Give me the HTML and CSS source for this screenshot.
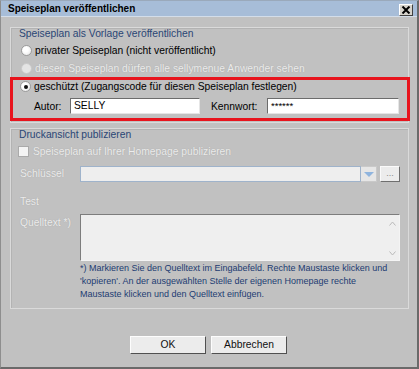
FILE: index.html
```html
<!DOCTYPE html>
<html lang="de">
<head>
  <meta charset="UTF-8" />
  <title>Speiseplan veröffentlichen</title>
  <link rel="stylesheet" href="styles.css">
</head>
<body>
  <div class="window">
    <!-- Titelleiste -->
    <div class="titlebar">
      <span class="title">Speiseplan veröffentlichen</span>
      <span class="close">
        <svg width="10" height="8" viewBox="0 0 10 8"><path d="M1.5 0.5 L8.5 7.5 M8.5 0.5 L1.5 7.5" stroke="#000" stroke-width="2"/></svg>
      </span>
    </div>

    <div class="content">
      <!-- Vorlage -->
      <div class="group first">
        <div class="legend">Speiseplan als Vorlage veröffentlichen</div>
        <div class="opt"><span class="radio"></span>privater Speiseplan (nicht veröffentlicht)</div>
        <div class="opt disabled"><span class="radio"></span>diesen Speiseplan dürfen alle sellymenue Anwender sehen</div>
        <div class="highlight">
          <div class="opt"><span class="radio checked"></span>geschützt (Zugangscode für diesen Speiseplan festlegen)</div>
          <div class="creds">
            <span class="lbl-autor">Autor:</span>
            <span class="field autor">SELLY</span>
            <span class="lbl-kennwort">Kennwort:</span>
            <span class="field kennwort">******</span>
          </div>
        </div>
      </div>

      <!-- Druckansicht -->
      <div class="group second">
        <div class="legend">Druckansicht publizieren</div>
        <div class="check-row disabled"><span class="checkbox"></span>Speiseplan auf Ihrer Homepage publizieren</div>
        <div class="form">
          <span class="label disabled">Schlüssel</span>
          <div class="key-row">
            <span class="combo"></span>
            <span class="combo-arrow">
              <svg width="10" height="5" viewBox="0 0 10 5"><path d="M0 0 L10 0 L5 5 Z" fill="#8fb4de"/></svg>
            </span>
            <span class="dots">...</span>
          </div>
          <span class="label disabled test">Test</span>
          <span></span>
          <span class="label disabled src">Quelltext *)</span>
          <div class="textarea">
            <span class="scroll">
              <svg width="7" height="5" viewBox="0 0 7 5"><path d="M0.5 4.5 L3.5 1 L6.5 4.5" fill="none" stroke="#b9b9b9"/></svg>
              <svg width="7" height="5" viewBox="0 0 7 5"><path d="M0.5 0.5 L3.5 4 L6.5 0.5" fill="none" stroke="#b9b9b9"/></svg>
            </span>
          </div>
          <span></span>
          <p class="note">*) Markieren Sie den Quelltext im Eingabefeld. Rechte Maustaste klicken und 'kopieren'. An der ausgewählten Stelle der eigenen Homepage rechte Maustaste klicken und den Quelltext einfügen.</p>
        </div>
      </div>

      <div class="buttons">
        <span class="btn">OK</span>
        <span class="btn">Abbrechen</span>
      </div>
    </div>
  </div>
</body>
</html>
```

FILE: styles.css
```css
html, body {
  margin: 0;
  padding: 0;
}

body {
  font-family: 'Liberation Sans', Arial, sans-serif;
  font-size: 10.3px;
  color: #000;
  background: #c0c0c0;
}

.window {
  width: 419px;
  height: 369px;
  box-sizing: border-box;
  background: #c1c1c1;
  border-left: 1px solid #8e8e8e;
  border-right: 2px solid #6a6a6a;
  border-bottom: 2px solid #6a6a6a;
  border-top: 1px solid #9aa9bb;
}

.titlebar {
  height: 15px;
  background: #a7bdd8;
  border-bottom: 1px solid #d3dde9;
  display: flex;
  align-items: center;
  justify-content: space-between;
  padding: 0 4px 0 7px;
}

.title {
  font-weight: bold;
  font-size: 10px;
}

.close {
  width: 12px;
  height: 10px;
  background: #d6d3cc;
  border: 1px solid;
  border-color: #fff #404040 #404040 #fff;
  display: flex;
  align-items: center;
  justify-content: center;
  margin-top: 3px;
}

.content {
  padding: 10px 8px 0 9px;
}

.group {
  border: 1px solid #dadada;
  box-shadow: inset 1px 1px 0 #b3b3b3;
}

.legend {
  color: #2a4675;
  line-height: 11px;
  padding-left: 8px;
}

.first {
  height: 94px;
}

.first .legend {
  margin-bottom: 2px;
}

.opt {
  display: flex;
  align-items: center;
  height: 18px;
  padding-left: 10px;
}

.radio {
  width: 9px;
  height: 9px;
  border-radius: 50%;
  background: radial-gradient(circle at 40% 40%, #fff 30%, #e2e2e2 100%);
  border: 1px solid #9c9c9c;
  margin-right: 3px;
  display: flex;
  align-items: center;
  justify-content: center;
}

.radio.checked::after {
  content: "";
  width: 4px;
  height: 4px;
  border-radius: 50%;
  background: #111;
}

.disabled {
  color: #ececec;
  text-shadow: 0 0 1px #9d9d9d;
}

.disabled .radio {
  background: #e4e4e4;
  border-color: #c8c8c8;
}

.highlight {
  border: 3px solid #e8141d;
  margin: 0 -2px 0 -1px;
  height: 38px;
}

.highlight .opt {
  height: 13px;
  padding-left: 7px;
}

.creds {
  display: flex;
  align-items: center;
  margin-top: 5px;
}

.field {
  height: 14px;
  box-sizing: content-box;
  background: #fff;
  border: 1px solid;
  border-color: #6c6c6c #e6e6e6 #e6e6e6 #6c6c6c;
  line-height: 14px;
  padding-left: 3px;
}

.lbl-autor {
  margin-left: 21px;
  width: 36px;
}

.autor {
  width: 125px;
}

.lbl-kennwort {
  margin-left: 11px;
  width: 56px;
}

.kennwort {
  width: 127px;
  font-size: 9.5px;
}

.second {
  margin-top: 5px;
  height: 179px;
}

.check-row {
  display: flex;
  align-items: center;
  height: 14px;
  margin-top: 4px;
  padding-left: 7px;
}

.checkbox {
  width: 9px;
  height: 9px;
  background: #f4f4f4;
  border: 1px solid #aaa;
  margin-right: 4px;
}

.form {
  display: grid;
  grid-template-columns: 60px 320px;
  align-items: start;
  padding-left: 9px;
  margin-top: 8px;
}

.label {
  line-height: 15px;
}

.key-row {
  display: flex;
  height: 16px;
}

.combo {
  width: 279px;
  background: #eeeeee;
  border: 1px solid #9fb3cb;
}

.combo-arrow {
  width: 15px;
  background: #e6e6e6;
  border: 1px solid #c9c9c9;
  border-left: none;
  display: flex;
  align-items: center;
  justify-content: center;
}

.dots {
  width: 18px;
  margin-left: 3px;
  background: #ececec;
  border: 1px solid;
  border-color: #fafafa #6f6f6f #6f6f6f #fafafa;
  font-size: 9px;
  line-height: 12px;
  text-align: center;
  color: #8a8a8a;
}

.test {
  margin-top: 12px;
  height: 20px;
}

.src {
  margin-top: 1px;
}

.textarea {
  height: 45px;
  background: #efefef;
  border: 1px solid;
  border-color: #7d7d7d #f4f4f4 #f4f4f4 #7d7d7d;
  display: flex;
  justify-content: flex-end;
}

.scroll {
  width: 14px;
  display: flex;
  flex-direction: column;
  justify-content: space-between;
  align-items: center;
  padding: 6px 0 4px;
}

.note {
  grid-column: 2;
  margin: 1px 0 0;
  color: #1d3c72;
  font-size: 9px;
  line-height: 13px;
}

.buttons {
  display: flex;
  justify-content: center;
  gap: 5px;
  margin-top: 27px;
  padding-right: 2px;
}

.btn {
  width: 74px;
  height: 16px;
  background: #ececec;
  border: 1px solid;
  border-color: #fdfdfd #505050 #505050 #fdfdfd;
  text-align: center;
  line-height: 16px;
  color: #111;
}
```
